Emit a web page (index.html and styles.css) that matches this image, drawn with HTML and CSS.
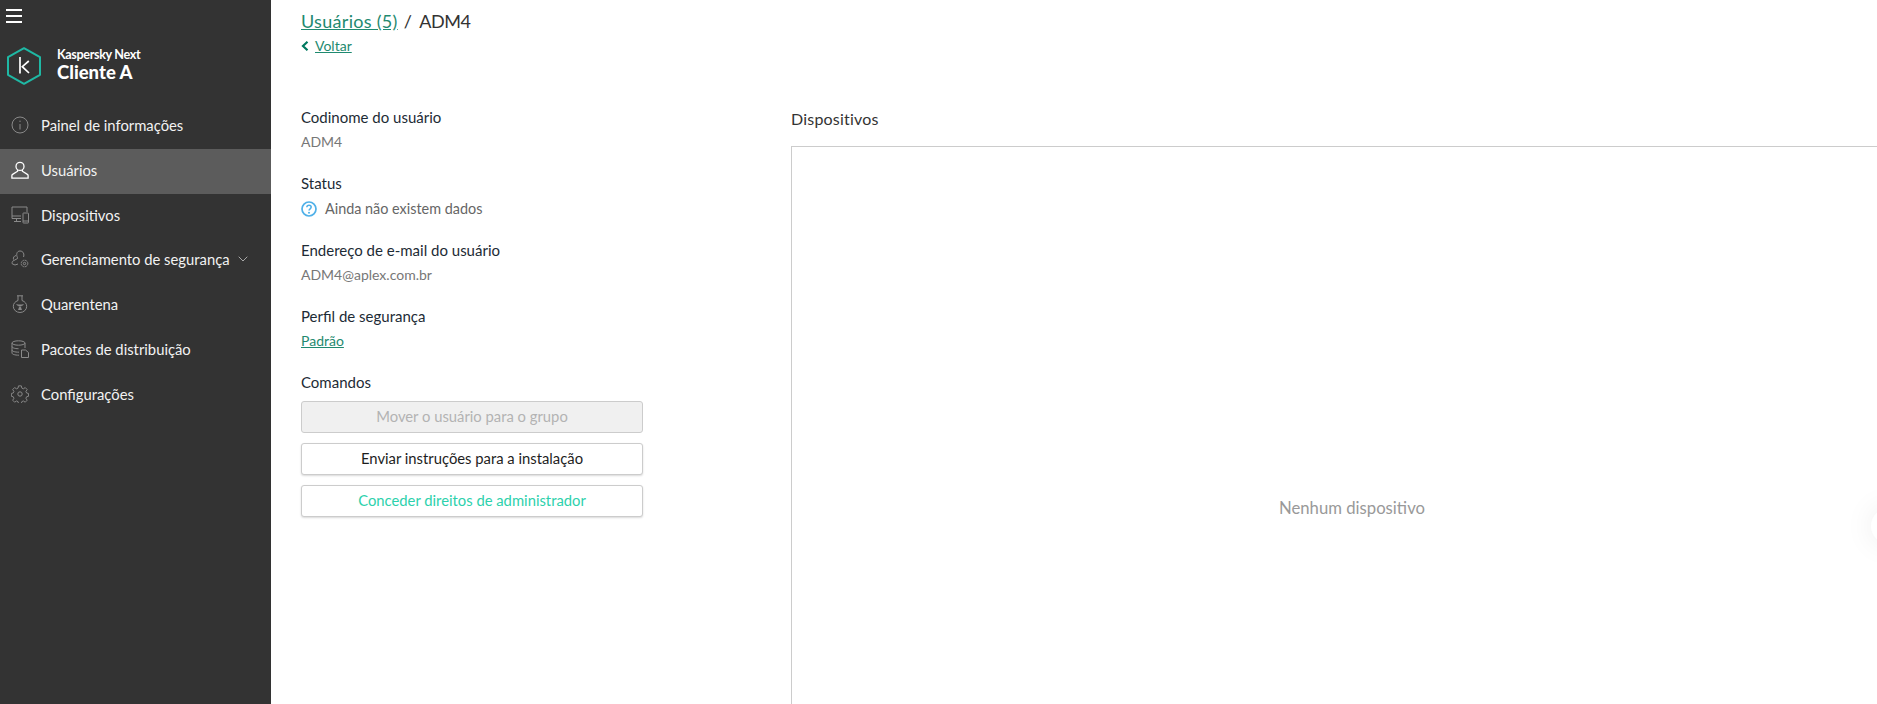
FILE: index.html
```html
<!DOCTYPE html>
<html lang="pt-BR">
<head>
<meta charset="utf-8">
<title>Kaspersky Next</title>
<link rel="stylesheet" href="styles.css">
</head>
<body>
<div class="app">
  <aside class="sidebar">
    <button class="burger" aria-label="Menu"><span></span><span></span><span></span></button>
    <div class="brand">
      <svg class="logo" viewBox="0 0 36 38" fill="none">
        <path d="M18 1.2 34 10.2V27.8L18 36.8 2 27.8V10.2Z" stroke="#1fb8a4" stroke-width="2" stroke-linejoin="round"/>
        <path d="M14 10V26.5M22.8 14 16.300 19.700 23 26" stroke="#fff" stroke-width="1.7"/>
      </svg>
      <div class="brand-text">
        <div class="brand-product">Kaspersky Next</div>
        <div class="brand-client">Cliente A</div>
      </div>
    </div>
    <nav class="nav">
      <a class="nav-item">
        <svg class="nav-icon" viewBox="0 0 18 18" fill="none" stroke="#8a8a8a" stroke-width="1"><circle cx="9" cy="9" r="8"/><path d="M9 8v5.500M9 4.600v1.400"/></svg>
        <span>Painel de informações</span>
      </a>
      <a class="nav-item active">
        <svg class="nav-icon" viewBox="0 0 18 18" fill="none" stroke="#fff" stroke-width="1.3"><circle cx="9" cy="5.400" r="4"/><path d="M6.600 9v1.200L1.600 13.400c-.5.300-.7.700-.7 1.200v2.500h16.200v-2.500c0-.5-.2-.9-.7-1.200l-5-3.200V9"/></svg>
        <span>Usuários</span>
      </a>
      <a class="nav-item">
        <svg class="nav-icon" viewBox="0 0 18 18" fill="none" stroke="#8a8a8a" stroke-width="1"><path d="M10 12.500H1V1h15v5M1 10h9M5.500 12.500v3M3 15.500h7"/><rect x="12" y="7" width="5.500" height="10" rx=".5"/><path d="M12 15h5.500"/></svg>
        <span>Dispositivos</span>
      </a>
      <a class="nav-item">
        <svg class="nav-icon" viewBox="0 0 18 18" fill="none" stroke="#8a8a8a" stroke-width="1"><path d="M6.500 7.500C5 5 5.500 1 9 1s4.500 3.500 3.500 6"/><path d="M6.500 7.500v1L2 11c-1 .6-1 1.500-.8 2.800L4 15l3-1"/><path d="M5 5.500c-2 .5-3 2-2.500 4"/><circle cx="13.500" cy="13.500" r="1.200"/><circle cx="13.500" cy="13.500" r="3.300" stroke-dasharray="2 .6"/></svg>
        <span>Gerenciamento de segurança</span>
        <svg class="chevron" viewBox="0 0 10 6" fill="none" stroke="#a8a8a8" stroke-width="1"><path d="M.7.700 5 5l4.300-4.300"/></svg>
      </a>
      <a class="nav-item">
        <svg class="nav-icon" viewBox="0 0 18 18" fill="none" stroke="#8a8a8a" stroke-width="1"><path d="M6 .8h6M7 .8v4.700C4 6.500 2.300 8.800 2.300 11.300a6.700 6.200 0 0 0 13.400 0C15.700 8.800 14 6.500 11 5.500V.8"/><path d="M5.500 9.500 8 11h2l2.500-1.500M7.500 15l1-3h1l1 3" fill="#8a8a8a" stroke-width=".8"/></svg>
        <span>Quarentena</span>
      </a>
      <a class="nav-item">
        <svg class="nav-icon" viewBox="0 0 18 18" fill="none" stroke="#8a8a8a" stroke-width="1"><ellipse cx="7.500" cy="3" rx="6.500" ry="2.200"/><path d="M1 3v10c0 1.200 2.500 2.200 7 2.200M14 3v5M1 6.500c0 1.200 2.500 2.200 6.500 2.200M1 10c0 1.200 2.500 2.200 7 2.200"/><path d="M10.500 10h4l3 2.500v5h-7z"/></svg>
        <span>Pacotes de distribuição</span>
      </a>
      <a class="nav-item">
        <svg class="nav-icon" viewBox="0 0 18 18" fill="none" stroke="#8a8a8a" stroke-width="1"><circle cx="9" cy="9" r="2.200"/><path d="M7.500 1h3l.5 2.400 1.600.7 2-1.300 2 2.100-1.300 2 .7 1.600 2 .5v3l-2 .5-.7 1.600 1.300 2-2 2.100-2-1.300-1.600.7-.5 2h-3l-.5-2-1.600-.7-2 1.300-2-2.100 1.300-2-.7-1.600-2-.5v-3l2-.5.7-1.600-1.300-2 2-2.100 2 1.300 1.600-.7z" transform="scale(.95) translate(.4 -.1)"/></svg>
        <span>Configurações</span>
      </a>
    </nav>
  </aside>
  <main class="main">
    <header class="head">
      <h1 class="crumbs"><a class="link">Usuários (5)</a><span class="sep">/</span><span class="crumb-current">ADM4</span></h1>
      <div class="back">
        <svg class="back-icon" viewBox="0 0 8 10" fill="none" stroke="#00795f" stroke-width="2.2"><path d="M6.500 .8 2 5l4.500 4.200"/></svg>
        <a class="link">Voltar</a>
      </div>
    </header>
    <div class="columns">
      <section class="details">
        <div class="field">
          <div class="label">Codinome do usuário</div>
          <div class="value">ADM4</div>
        </div>
        <div class="field field-status">
          <div class="label">Status</div>
          <div class="value status">
            <svg class="status-icon" viewBox="0 0 16 16" fill="none"><circle cx="8" cy="8" r="7" stroke="#4fb0e8" stroke-width="1.7"/><path d="M5.800 6.200C5.900 4.900 6.800 4.200 8 4.200c1.300 0 2.200.8 2.200 1.900 0 1.700-2.200 1.700-2.200 3.500" stroke="#4fb0e8" stroke-width="1.5"/><circle cx="8" cy="11.800" r="1" fill="#4fb0e8"/></svg>
            <span>Ainda não existem dados</span>
          </div>
        </div>
        <div class="field">
          <div class="label">Endereço de e-mail do usuário</div>
          <div class="value">ADM4@aplex.com.br</div>
        </div>
        <div class="field">
          <div class="label">Perfil de segurança</div>
          <div class="value"><a class="link">Padrão</a></div>
        </div>
        <div class="field commands">
          <div class="label">Comandos</div>
          <button class="btn btn-disabled">Mover o usuário para o grupo</button>
          <button class="btn">Enviar instruções para a instalação</button>
          <button class="btn btn-green">Conceder direitos de administrador</button>
        </div>
      </section>
      <section class="devices">
        <h2 class="devices-title">Dispositivos</h2>
        <div class="devices-box">Nenhum dispositivo</div>
      </section>
    </div>
  </main>
</div>
<div class="float-handle"></div>
</body>
</html>
```
FILE: styles.css
```css
* { box-sizing: border-box; }
html, body { height: 100%; }
body {
  margin: 0;
  overflow: hidden;
  background: #fff;
  font-family: "Lato", "Liberation Sans", sans-serif;
  color: #1d2b35;
}
.app { display: flex; height: 704px; width: 1877px; }
.sidebar { width: 271px; flex: none; background: #333; color: #fff; }
.burger {
  display: flex; flex-direction: column; gap: 4px;
  width: 16px; margin: 9px 0 0 6px; padding: 0; border: 0; background: none;
}
.burger span { display: block; height: 2px; background: #fff; }
.brand { display: flex; align-items: center; gap: 15px; margin: 24px 0 0 6px; height: 38px; }
.logo { width: 36px; height: 38px; flex: none; }
.brand-text { display: flex; flex-direction: column; margin-top: -4px; }
.brand-product { font-size: 12.6px; line-height: 15px; font-weight: 700; letter-spacing: -.35px; }
.brand-client { font-size: 18.5px; line-height: 20px; font-weight: 900; }
.nav { margin-top: 19px; display: flex; flex-direction: column; }
.nav-item { display: flex; align-items: center; height: 44.83px; padding: 0 0 3px 11px; font-size: 14.8px; color: #f2f2f2; }
.nav-item.active { background: #5c5c5c; }
.nav-icon { width: 18px; height: 18px; flex: none; margin-right: 12px; }
.chevron { width: 10px; height: 6px; margin-left: 8px; }
.main { flex: 1; min-width: 0; padding-left: 30px; }
.head { height: 100px; padding-top: 10px; }
.crumbs { margin: 0; font-size: 18px; line-height: 22px; font-weight: 400; color: #333; display: flex; letter-spacing: .3px; }
.crumb-current { letter-spacing: -.4px; }
.sep { margin: 0 7px 0 6px; }
.link { color: #1f8a70; text-decoration: underline; }
.back { display: flex; align-items: center; gap: 6px; margin-top: 5px; font-size: 14px; line-height: 18px; }
.back-icon { width: 8px; height: 10px; }
.columns { display: flex; }
.details { width: 490px; flex: none; padding-right: 148px; padding-top: 8px; }
.field { margin-bottom: 23px; }
.label { font-size: 15px; line-height: 18px; color: #1d2b35; }
.value { margin-top: 7px; font-size: 14px; line-height: 18px; color: #777; }
.status { display: flex; align-items: center; gap: 8px; margin-top: 8px; color: #666; font-size: 14.4px; }
.status-icon { width: 16px; height: 16px; }
.btn {
  display: block; width: 100%; height: 32px; margin-top: 10px; padding: 0 0 2px;
  border: 1px solid #ccc; border-radius: 3px; background: #fff;
  box-shadow: 0 1px 2px rgba(0, 0, 0, .15);
  font: inherit; font-size: 14.8px; color: #1d1d1d;
}
.btn-disabled { background: #f0f0f0; color: #b3b3b3; box-shadow: none; }
.btn-green { color: #2dd1ac; }
.devices { flex: none; width: 1122px; padding-top: 10px; }
.devices-title { margin: 0 0 18px; font-size: 16px; line-height: 18px; font-weight: 400; letter-spacing: .2px; color: #333; }
.devices-box {
  display: flex; align-items: center; justify-content: center;
  height: 724px; border: 1px solid #ccc;
  font-size: 16.7px; color: #999;
}
.float-handle {
  position: absolute; left: 1871px; top: 508px; width: 36px; height: 36px;
  border-radius: 50%; background: #fff;
  box-shadow: 0 0 30px rgba(0, 0, 0, .08);
}
```
